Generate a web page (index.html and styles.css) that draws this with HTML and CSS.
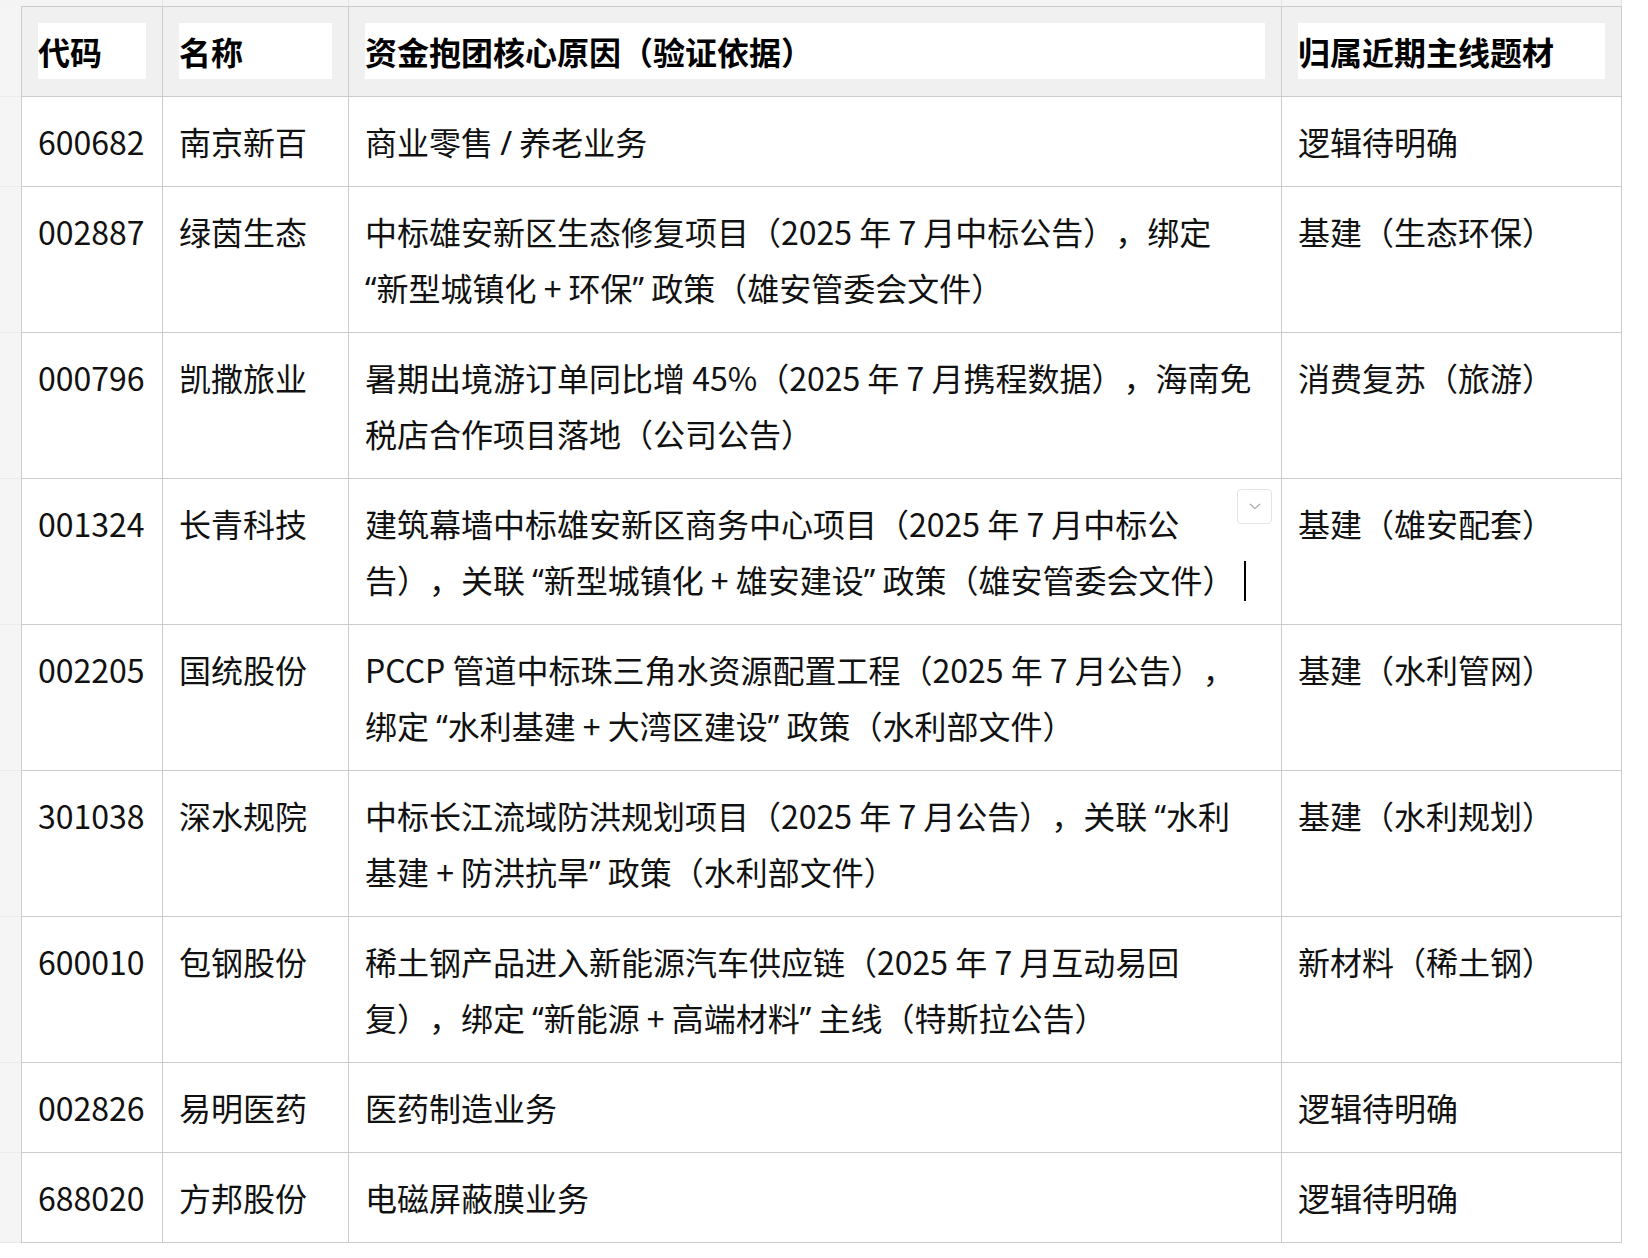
FILE: index.html
```html
<!DOCTYPE html>
<html lang="zh-CN">
<head>
<meta charset="utf-8">
<title>资金抱团核心原因</title>
<link rel="stylesheet" href="styles.css">
</head>
<body>
<table class="grid">
  <thead>
    <tr class="strip">
      <th class="gut"></th>
      <th class="s c1"></th>
      <th class="s c2"></th>
      <th class="s c3"></th>
      <th class="s c4"></th>
    </tr>
    <tr class="head">
      <th class="gut"></th>
      <th class="cell first"><div class="hl">代码</div></th>
      <th class="cell"><div class="hl">名称</div></th>
      <th class="cell"><div class="hl">资金抱团核心原因（验证依据）</div></th>
      <th class="cell"><div class="hl">归属近期主线题材</div></th>
    </tr>
  </thead>
  <tbody>
    <tr>
      <td class="gut"></td>
      <td class="cell first">600682</td>
      <td class="cell">南京新百</td>
      <td class="cell why">商业零售 <span class="q">/</span> 养老业务</td>
      <td class="cell">逻辑待明确</td>
    </tr>
    <tr>
      <td class="gut"></td>
      <td class="cell first">002887</td>
      <td class="cell">绿茵生态</td>
      <td class="cell why">中标雄安新区生态修复项目（2025 年 7 月中标公告），绑定<br><span class="q">“</span>新型城镇化 + 环保<span class="q">”</span> 政策（雄安管委会文件）</td>
      <td class="cell">基建（生态环保）</td>
    </tr>
    <tr>
      <td class="gut"></td>
      <td class="cell first">000796</td>
      <td class="cell">凯撒旅业</td>
      <td class="cell why">暑期出境游订单同比增 45%（2025 年 7 月携程数据），海南免<br>税店合作项目落地（公司公告）</td>
      <td class="cell">消费复苏（旅游）</td>
    </tr>
    <tr>
      <td class="gut"></td>
      <td class="cell first">001324</td>
      <td class="cell">长青科技</td>
      <td class="cell why editing">建筑幕墙中标雄安新区商务中心项目（2025 年 7 月中标公<br>告），关联 <span class="q">“</span>新型城镇化 + 雄安建设<span class="q">”</span> 政策（雄安管委会文件）<span class="caret"></span>
        <span class="dd"><svg width="14" height="9" viewBox="0 0 14 9"><path d="M2 2 L7 6.5 L12 2" fill="none" stroke="#a8a8a8" stroke-width="1.2"/></svg></span>
      </td>
      <td class="cell">基建（雄安配套）</td>
    </tr>
    <tr>
      <td class="gut"></td>
      <td class="cell first">002205</td>
      <td class="cell">国统股份</td>
      <td class="cell why">PCCP 管道中标珠三角水资源配置工程（2025 年 7 月公告），<br>绑定 <span class="q">“</span>水利基建 + 大湾区建设<span class="q">”</span> 政策（水利部文件）</td>
      <td class="cell">基建（水利管网）</td>
    </tr>
    <tr>
      <td class="gut"></td>
      <td class="cell first">301038</td>
      <td class="cell">深水规院</td>
      <td class="cell why">中标长江流域防洪规划项目（2025 年 7 月公告），关联 <span class="q">“</span>水利<br>基建 + 防洪抗旱<span class="q">”</span> 政策（水利部文件）</td>
      <td class="cell">基建（水利规划）</td>
    </tr>
    <tr>
      <td class="gut"></td>
      <td class="cell first">600010</td>
      <td class="cell">包钢股份</td>
      <td class="cell why">稀土钢产品进入新能源汽车供应链（2025 年 7 月互动易回<br>复），绑定 <span class="q">“</span>新能源 + 高端材料<span class="q">”</span> 主线（特斯拉公告）</td>
      <td class="cell">新材料（稀土钢）</td>
    </tr>
    <tr>
      <td class="gut"></td>
      <td class="cell first">002826</td>
      <td class="cell">易明医药</td>
      <td class="cell why">医药制造业务</td>
      <td class="cell">逻辑待明确</td>
    </tr>
    <tr>
      <td class="gut"></td>
      <td class="cell first">688020</td>
      <td class="cell">方邦股份</td>
      <td class="cell why">电磁屏蔽膜业务</td>
      <td class="cell">逻辑待明确</td>
    </tr>
  </tbody>
</table>
</body>
</html>
```

FILE: styles.css
```css
html, body {
  margin: 0;
  padding: 0;
  background: #ffffff;
}

body {
  font-family: "Noto Sans CJK SC", "Noto Sans", sans-serif;
  color: #111111;
  text-spacing-trim: space-all;
}

.q {
  font-family: "Noto Sans", "Noto Sans CJK SC", sans-serif;
  line-height: 1;
}

.grid {
  border-collapse: separate;
  border-spacing: 0;
  table-layout: fixed;
  width: 1622px;
}

.grid th,
.grid td {
  box-sizing: border-box;
  padding: 0;
  vertical-align: top;
}

.grid .gut {
  width: 21px;
  background: #f5f5f5;
  border-bottom: 1px solid #ebebeb;
}

.grid .strip th {
  height: 6px;
  background: #f4f4f4;
  border-right: 1px solid #e6e6e6;
}

.grid .strip .gut {
  border-right: none;
  border-bottom: none;
}

.c1 { width: 142px; }
.c2 { width: 186px; }
.c3 { width: 933px; }
.c4 { width: 340px; }

.grid .cell {
  padding: 16px 16px 17px 16px;
  font-size: 32px;
  line-height: 56px;
  text-align: left;
  border-right: 1px solid #cccccc;
  border-bottom: 1px solid #cccccc;
  background: #ffffff;
  font-weight: 400;
}

.grid .cell.first {
  border-left: 1px solid #cccccc;
}

.grid .head .cell {
  background: #f0f0f0;
  border-top: 1px solid #cccccc;
  font-weight: 700;
  color: #000000;
}

.hl {
  background: #ffffff;
  height: 56px;
  white-space: nowrap;
  overflow: hidden;
}

.grid .why {
  white-space: nowrap;
}

.grid .editing {
  position: relative;
}

.caret {
  display: inline-block;
  width: 2px;
  height: 40px;
  background: #000000;
  margin-left: 10px;
  vertical-align: -8px;
}

.dd {
  position: absolute;
  top: 10px;
  right: 9px;
  width: 35px;
  height: 35px;
  box-sizing: border-box;
  border: 1px solid #e4e4e4;
  border-radius: 4px;
  background: #ffffff;
  display: flex;
  align-items: center;
  justify-content: center;
}

.dd svg {
  display: block;
}
```
